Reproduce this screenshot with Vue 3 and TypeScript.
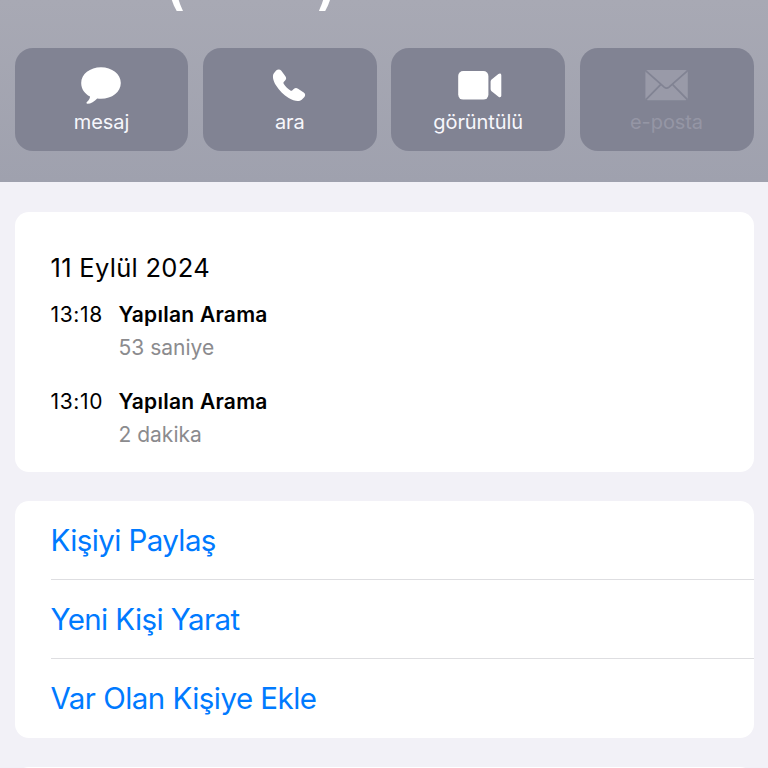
<script setup lang="ts">
type IconName = 'message' | 'phone' | 'video' | 'mail'

interface Action {
  icon: IconName
  label: string
  disabled?: boolean
}

interface Call {
  time: string
  kind: string
  duration: string
}

const actions: Action[] = [
  { icon: 'message', label: 'mesaj' },
  { icon: 'phone', label: 'ara' },
  { icon: 'video', label: 'görüntülü' },
  { icon: 'mail', label: 'e-posta', disabled: true },
]

const calls: Call[] = [
  { time: '13:18', kind: 'Yapılan Arama', duration: '53 saniye' },
  { time: '13:10', kind: 'Yapılan Arama', duration: '2 dakika' },
]

const links: string[] = ['Kişiyi Paylaş', 'Yeni Kişi Yarat', 'Var Olan Kişiye Ekle']
</script>

<template>
  <div class="screen">
    <header class="header">
      <div class="title"><span>(</span><span>)</span></div>
      <nav class="actions">
        <button
          v-for="action in actions"
          :key="action.icon"
          type="button"
          class="action"
          :class="{ disabled: action.disabled }"
          :disabled="action.disabled"
        >
          <svg class="icon" width="48" height="40" viewBox="0 0 48 40" aria-hidden="true">
            <path
              v-if="action.icon === 'message'"
              d="M24 2.2C35 2.2 43.8 9 43.8 18S35 33.8 24 33.8C22.6 33.8 21.4 33.7 20.2 33.5C17.6 36.5 13.8 38.8 10.4 38.8C9.3 38.7 9.2 37.8 9.9 37.1C11.9 35.3 13 33.3 13 31.5C7.6 28.9 4.2 23.8 4.2 18C4.2 9 13 2.2 24 2.2Z"
            />
            <path
              v-else-if="action.icon === 'phone'"
              transform="translate(0 0.2) scale(0.965)"
              d="M8.2 8.3L10.5 5.6C12.1 3.9 14.4 3.9 15.9 5.7L20.1 11.4C21.3 13.1 21.1 14.5 19.8 15.9L18.4 17.4C17.9 18 17.9 18.5 18.3 19.2C20.2 22.1 22.3 24.3 25.3 26.3C26 26.7 26.5 26.7 27.1 26.2L28.7 24.7C30.1 23.4 31.5 23.2 33.2 24.3L39.1 28.4C40.9 29.7 41.1 31.7 39.6 33.3L37 35.8C34.4 38.2 28.8 37.3 23.5 34C18.4 30.8 13.6 26.2 10.3 20.8C7.6 16.4 6.1 11.1 8.2 8.3Z"
            />
            <g v-else-if="action.icon === 'video'">
              <rect x="4.2" y="6" width="30.2" height="28.6" rx="5" />
              <path
                d="M36.6 17C36.6 15.8 37 15 37.9 14.2L44.4 9.1C45.9 8 47.3 8.7 47.3 10.3V30.6C47.3 32.2 45.9 32.8 44.5 31.7L37.9 26.6C37 25.8 36.6 25 36.6 23.8Z"
              />
            </g>
            <g v-else>
              <rect x="2.4" y="4.9" width="42.4" height="30.4" rx="2.5" />
              <path class="fold" d="M2.9 5.9L21.2 22.1Q23.6 24.1 26 22.1L44.4 5.9M2.9 34.7L17.4 19.9M44.4 34.7L29.9 19.9" />
            </g>
          </svg>
          <span class="label">{{ action.label }}</span>
        </button>
      </nav>
    </header>

    <main class="content">
      <section class="card log">
        <h2 class="date">11 Eylül 2024</h2>
        <div v-for="call in calls" :key="call.time" class="call">
          <time class="time">{{ call.time }}</time>
          <div class="details">
            <div class="kind">{{ call.kind }}</div>
            <div class="duration">{{ call.duration }}</div>
          </div>
        </div>
      </section>

      <section class="card links">
        <a v-for="link in links" :key="link" class="link">{{ link }}</a>
      </section>

      <section class="card next"></section>
    </main>
  </div>
</template>

<style>
body {
  margin: 0;
  background: #f2f1f7;
}
</style>

<style scoped>
.screen {
  box-sizing: border-box;
  width: 768px;
  height: 768px;
  overflow: hidden;
  background: #f2f1f7;
  color: #000;
  font-family: Inter, 'Liberation Sans', sans-serif;
}

.header {
  display: flex;
  flex-direction: column;
  box-sizing: border-box;
  height: 181.5px;
  background: linear-gradient(#a8a9b4, #9fa1ae);
}

.title {
  display: flex;
  align-items: flex-end;
  justify-content: space-between;
  box-sizing: border-box;
  width: 171px;
  height: 47.5px;
  margin-left: 165.5px;
  padding-bottom: 28px;
  overflow: hidden;
  color: #fff;
  font-size: 52px;
  font-weight: 600;
  line-height: 68px;
}

.actions {
  display: grid;
  grid-template-columns: repeat(4, 1fr);
  gap: 14.4px;
  padding: 0 14.5px;
}

.action {
  display: flex;
  flex-direction: column;
  align-items: center;
  box-sizing: border-box;
  height: 103.5px;
  margin: 0;
  padding: 17px 0 0;
  border: 0;
  border-radius: 18px;
  background: #818393;
  color: #fff;
  font-family: inherit;
}

.icon {
  display: block;
  fill: #fff;
}

.label {
  color: #f7f7fc;
  font-size: 20px;
  line-height: 24px;
  letter-spacing: -0.08px;
  margin-top: 5px;
}

.disabled .icon {
  fill: #999aa8;
}

.disabled .label {
  color: #9596a5;
}

.fold {
  fill: none;
  stroke: #818393;
  stroke-width: 1.8;
}

.content {
  display: flex;
  flex-direction: column;
  gap: 29.2px;
  padding: 30px 14.5px 0;
}

.card {
  box-sizing: border-box;
  border-radius: 14px;
  background: #fff;
}

.log {
  height: 260px;
  padding: 40px 36px 0;
}

.date {
  margin: 0 0 14px;
  font-size: 25.5px;
  font-weight: 400;
  line-height: 32px;
  letter-spacing: 0.3px;
}

.call {
  display: flex;
  height: 87px;
}

.time {
  width: 68px;
  font-size: 21px;
  line-height: 33px;
  letter-spacing: 0.65px;
}

.kind {
  font-size: 21px;
  font-weight: 600;
  line-height: 33px;
  letter-spacing: 0.25px;
}

.duration {
  color: #8b8b8e;
  font-size: 21px;
  line-height: 33px;
}

.links {
  height: 237px;
  padding-left: 36px;
}

.link {
  display: block;
  box-sizing: border-box;
  height: 79px;
  border-bottom: 1px solid #dedee1;
  color: #007aff;
  font-size: 29.5px;
  line-height: 79px;
  letter-spacing: -0.6px;
}

.link:last-child {
  border-bottom: 0;
  letter-spacing: -0.54px;
}

.next {
  height: 80px;
}
</style>
